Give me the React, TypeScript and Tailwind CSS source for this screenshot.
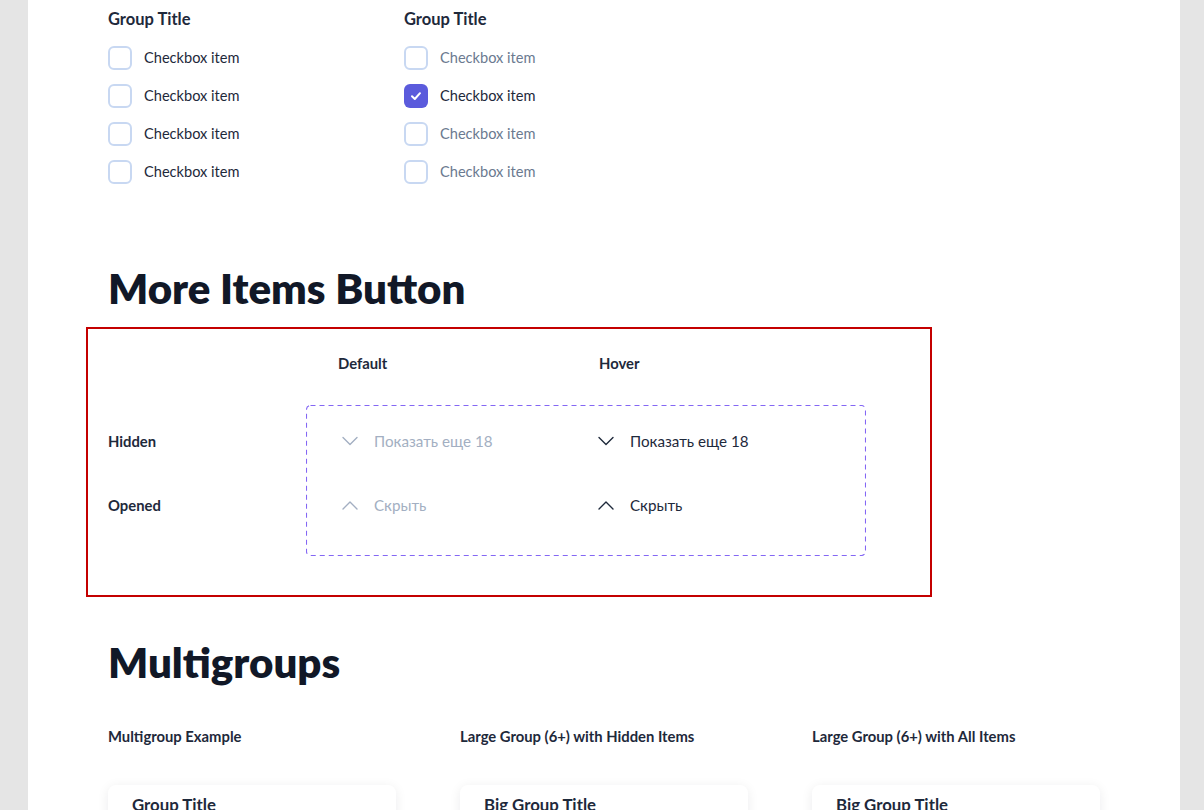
import React from 'react';

const font = { fontFamily: 'Lato, "Noto Sans", sans-serif' };

function Chevron({ up, className }: { up?: boolean; className?: string }) {
  return (
    <svg width="16" height="16" viewBox="0 0 16 16" fill="none" className={className}>
      {up ? (
        <path d="M1 12L8 5L15 12" stroke="currentColor" strokeWidth="1.4" strokeLinecap="round" strokeLinejoin="round" />
      ) : (
        <path d="M1 4.5L8 11.5L15 4.5" stroke="currentColor" strokeWidth="1.4" strokeLinecap="round" strokeLinejoin="round" />
      )}
    </svg>
  );
}

function Checkbox({ checked }: { checked?: boolean }) {
  if (checked) {
    return (
      <span className="w-6 h-6 rounded-md bg-[#5b5bdc] flex items-center justify-center shrink-0">
        <svg width="14" height="14" viewBox="0 0 14 14" fill="none">
          <path d="M3 7.3L5.8 10L11 4.2" stroke="white" strokeWidth="2" strokeLinecap="round" strokeLinejoin="round" />
        </svg>
      </span>
    );
  }
  return <span className="w-6 h-6 rounded-md border-2 border-[#c8d8f2] bg-white shrink-0" />;
}

function CheckGroup({ muted, checkedIndex }: { muted?: boolean; checkedIndex?: number }) {
  return (
    <div className="w-[296px]">
      <div className="text-[16.5px] font-bold text-[#1e293b] h-[38px] pt-[7px] leading-[22px]">Group Title</div>
      <div className="flex flex-col">
        {[0, 1, 2, 3].map(i => (
          <div key={i} className="flex items-center gap-3 h-[38px]">
            <Checkbox checked={i === checkedIndex} />
            <span className={`text-[14.6px] leading-[20px] -mt-[1px] ${muted && i !== checkedIndex ? 'text-[#6b7a90]' : 'text-[#1e293b]'}`}>Checkbox item</span>
          </div>
        ))}
      </div>
    </div>
  );
}

function MoreButton({ up, label, hover }: { up?: boolean; label: string; hover?: boolean }) {
  return (
    <div className={`flex items-center gap-4 text-[15.2px] ${hover ? 'text-[#1e293b]' : 'text-[#a3afc2]'}`}>
      <Chevron up={up} className={hover ? 'text-[#1e293b]' : 'text-[#a3afc2]'} />
      <span>{label}</span>
    </div>
  );
}

function Card({ title }: { title: string }) {
  return (
    <div className="w-[288px] h-[120px] bg-white rounded-lg shadow-[0_2px_12px_rgba(15,23,42,0.08)] px-6 pt-[10px]">
      <div className="text-[16.8px] leading-[20px] font-bold text-[#1e293b]">{title}</div>
    </div>
  );
}

export default function App() {
  return (
    <div className="h-[810px] overflow-hidden bg-[#e5e5e5] pl-[28px] pr-[24px]" style={font}>
      <div className="bg-white h-[810px] pl-[80px] pt-[1px] overflow-hidden">
        <div className="flex">
          <CheckGroup />
          <CheckGroup muted checkedIndex={1} />
        </div>

        <h2 className="mt-[73px] text-[42px] font-extrabold text-[#111827] leading-[48px]">More Items Button</h2>

        <div className="mt-[15px] -ml-[22px] w-[846px] h-[270px] border-2 border-[#c40000] pl-[20px] pt-[25px]">
          <div className="flex h-[18px] items-center text-[14.8px] font-bold text-[#1e293b]">
            <div className="w-[230px]" />
            <div className="w-[261px]">Default</div>
            <div>Hover</div>
          </div>
          <div className="flex mt-[33px]">
            <div className="w-[198px] flex flex-col text-[14.8px] font-bold text-[#1e293b]">
              <div className="h-[72px] flex items-center">Hidden</div>
              <div className="h-[56px] flex items-center">Opened</div>
            </div>
            <div className="relative w-[560px] h-[151px] pl-[36px]">
              <svg className="absolute inset-0 pointer-events-none" width="560" height="151" fill="none">
                <rect x="0.5" y="0.5" width="559" height="150" rx="4" stroke="#8467f4" strokeWidth="1.1" strokeDasharray="5 4" />
              </svg>
              <div className="flex h-[72px] items-center">
                <div className="w-[256px]"><MoreButton label="Показать еще 18" /></div>
                <MoreButton label="Показать еще 18" hover />
              </div>
              <div className="flex h-[56px] items-center">
                <div className="w-[256px]"><MoreButton up label="Скрыть" /></div>
                <MoreButton up label="Скрыть" hover />
              </div>
            </div>
          </div>
        </div>

        <h2 className="mt-[41px] text-[42px] font-extrabold text-[#111827] leading-[48px]">Multigroups</h2>

        <div className="flex mt-[40px] gap-16">
          {['Multigroup Example', 'Large Group (6+) with Hidden Items', 'Large Group (6+) with All Items'].map(t => (
            <div key={t} className="w-[288px] text-[14.8px] font-bold text-[#1e293b] leading-[20px]">{t}</div>
          ))}
        </div>

        <div className="flex mt-[39px] gap-16">
          <Card title="Group Title" />
          <Card title="Big Group Title" />
          <Card title="Big Group Title" />
        </div>
      </div>
    </div>
  );
}
